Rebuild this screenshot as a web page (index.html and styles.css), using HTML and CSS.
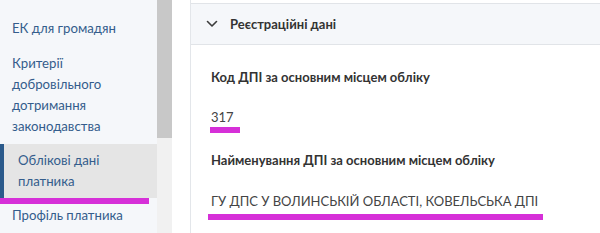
FILE: index.html
```html
<!DOCTYPE html>
<html lang="uk">
<head>
<meta charset="utf-8">
<link rel="stylesheet" href="styles.css">
</head>
<body>
<div class="page">
  <aside class="sidebar">
    <nav class="menu">
      <div class="item">Вхідні документи</div>
      <div class="item">ЕК для громадян</div>
      <div class="item">Критерії добровільного дотримання законодавства</div>
      <div class="item active">Облікові дані платника</div>
      <div class="item">Профіль платника</div>
    </nav>
  </aside>
  <div class="scrollbar"><div class="thumb"></div></div>
  <div class="gap"></div>
  <main class="panel">
    <div class="panel-head">
      <svg class="chev" width="12" height="8" viewBox="0 0 12 8"><path d="M1.5 1.5 L6 6 L10.5 1.5" fill="none" stroke="#3c3c3c" stroke-width="1.6" stroke-linecap="round" stroke-linejoin="round"/></svg>
      <span class="head-title">Реєстраційні дані</span>
    </div>
    <div class="panel-body">
      <div class="label">Код ДПІ за основним місцем обліку</div>
      <div class="value first"><span class="mark short">317</span></div>
      <div class="label">Найменування ДПІ за основним місцем обліку</div>
      <div class="value second"><span class="mark long">ГУ ДПС У ВОЛИНСЬКІЙ ОБЛАСТІ, КОВЕЛЬСЬКА ДПІ</span></div>
    </div>
  </main>
</div>
</body>
</html>
```

FILE: styles.css
```css
* { box-sizing: border-box; }
html, body { margin: 0; padding: 0; }
body {
  width: 600px;
  height: 233px;
  overflow: hidden;
  background: #ffffff;
  font-family: Lato, "Noto Sans", sans-serif;
}
.page {
  display: flex;
  height: 233px;
}
.sidebar {
  width: 157px;
  flex: none;
  background: #f5f7fa;
  overflow: hidden;
}
.menu {
  margin-top: -24.5px;
}
.item {
  position: relative;
  padding: 7px 12px;
  font-size: 13.2px;
  line-height: 21px;
  color: #345d8c;
}
.item.active {
  background: #e5e5e5;
  border-left: 4px solid #2b5a8b;
  padding: 6px 12px 6px 14px;
}
.item.active::after {
  content: "";
  position: absolute;
  left: -4px;
  bottom: -6px;
  width: 149px;
  height: 6px;
  background: #d630d8;
}
.scrollbar {
  width: 15px;
  flex: none;
  background: #f1f1f1;
}
.thumb {
  height: 138px;
  background: #c8c8c8;
}
.gap {
  width: 18px;
  flex: none;
}
.panel {
  flex: 1;
  border-left: 1px solid #e3e6ea;
  padding-top: 3px;
}
.panel-head {
  display: flex;
  align-items: center;
  height: 42px;
  background: #f5f7fa;
  border-top: 1px solid #e1e4e8;
  border-bottom: 1px solid #e1e4e8;
  padding-left: 15px;
}
.chev { margin-right: 12px; }
.head-title {
  font-size: 13px;
  font-weight: 700;
  color: #333;
}
.panel-body {
  padding: 22px 20px 0 20px;
}
.label {
  font-size: 13px;
  font-weight: 700;
  color: #333;
  line-height: 20px;
}
.value {
  font-size: 13px;
  color: #444;
  line-height: 20px;
}
.value.first {
  margin-top: 20px;
  margin-bottom: 23px;
}
.value.second {
  margin-top: 21px;
}
.mark {
  position: relative;
  display: inline-block;
}
.mark::after {
  content: "";
  position: absolute;
  height: 6px;
  background: #d630d8;
}
.mark.short::after { left: -1px; width: 30px; top: 20px; }
.mark.long::after { left: -3px; width: 335px; top: 23px; }
```
